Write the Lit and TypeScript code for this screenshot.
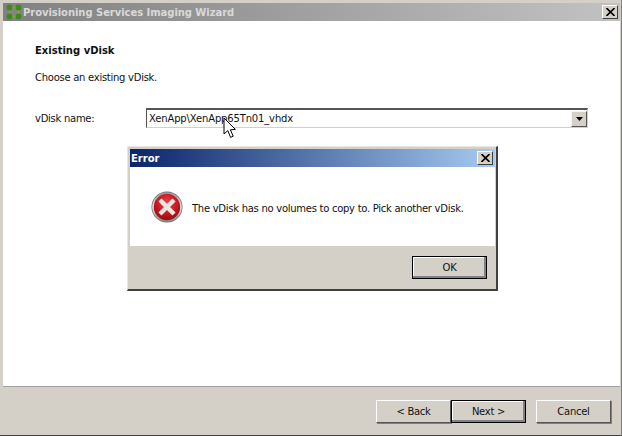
import { LitElement, html, css, svg } from "lit";
import { customElement } from "lit/decorators.js";

const logoIcon = svg`
  <svg class="logo" width="16" height="16" viewBox="0 0 16 16">
    <rect x="3.5" y="3.5" width="9" height="9" fill="#85857c" stroke="#86a544" stroke-width="1.6" />
    <circle cx="3.5" cy="3.5" r="2.9" fill="#3f8a1e" />
    <circle cx="12.5" cy="3.5" r="2.9" fill="#3f8a1e" />
    <circle cx="3.5" cy="12.5" r="2.9" fill="#3f8a1e" />
    <circle cx="12.5" cy="12.5" r="2.9" fill="#3f8a1e" />
  </svg>
`;

const errorIcon = svg`
  <svg class="error-icon" width="32" height="32" viewBox="0 0 32 32">
    <defs>
      <radialGradient id="red" cx="50%" cy="35%" r="70%">
        <stop offset="0" stop-color="#e8474a" />
        <stop offset="0.6" stop-color="#c4161c" />
        <stop offset="1" stop-color="#8c0d12" />
      </radialGradient>
      <linearGradient id="ring" x1="0" y1="0" x2="0" y2="1">
        <stop offset="0" stop-color="#9a9a9a" />
        <stop offset="0.5" stop-color="#e2e2e2" />
        <stop offset="1" stop-color="#8a8a8a" />
      </linearGradient>
    </defs>
    <circle cx="16" cy="16" r="15.5" fill="#6e6e6e" />
    <circle cx="16" cy="16" r="14.8" fill="url(#ring)" />
    <circle cx="16" cy="16" r="13.2" fill="url(#red)" />
    <path d="M10.5 10.5L21.5 21.5M21.5 10.5L10.5 21.5" stroke="#e9e6e6" stroke-width="4.4" stroke-linecap="square" />
  </svg>
`;

const closeIcon = svg`
  <svg width="9" height="8" viewBox="0 0 9 8">
    <path d="M0.5 0L8.5 8M8.5 0L0.5 8" stroke="#000" stroke-width="1.6" fill="none" />
  </svg>
`;

const arrowIcon = svg`
  <svg width="7" height="4" viewBox="0 0 7 4"><path d="M0 0H7L3.5 4Z" fill="#000" /></svg>
`;

const cursorIcon = svg`
  <svg class="cursor" width="14" height="22" viewBox="0 0 14 22">
    <path d="M1 1V17L4.8 13.6L7.6 20.4L10.2 19.2L7.4 12.8L12.4 12.4Z" fill="#fff" stroke="#000" stroke-width="1" stroke-linejoin="miter" />
  </svg>
`;

@customElement("app-root")
export class AppRoot extends LitElement {
  static override styles = css`
    :host {
      display: block;
      width: 622px;
      height: 436px;
      position: relative;
      overflow: hidden;
      font-family: "DejaVu Sans", sans-serif;
      font-size: 10px;
      letter-spacing: -0.27px;
      color: #111;
    }

    * {
      box-sizing: border-box;
    }

    .window {
      width: 622px;
      height: 436px;
      display: flex;
      flex-direction: column;
      padding: 3px 1px 0 3px;
      background: #d4d0c8;
      border-right: 1px solid #808080;
      border-bottom: 1px solid #404040;
    }

    .titlebar {
      height: 18px;
      flex: none;
      display: flex;
      align-items: center;
      gap: 1px;
      padding: 0 2px 0 3px;
      background: linear-gradient(90deg, #808080, #c2c2c2);
      color: #d9d9d9;
      font-weight: bold;
      letter-spacing: -0.05px;
    }

    .titlebar .text {
      flex: 1;
    }

    .close {
      width: 16px;
      height: 14px;
      flex: none;
      display: flex;
      align-items: center;
      justify-content: center;
      background: #d4d0c8;
      border: 1px solid;
      border-color: #fff #404040 #404040 #fff;
    }

    .body {
      flex: none;
      height: 366px;
      background: #fff;
      border-bottom: 1px solid #a0a0a0;
      padding: 23px 0 0 32px;
    }

    .heading {
      font-weight: bold;
      letter-spacing: 0;
      line-height: 13px;
      margin-bottom: 14px;
    }

    .hint {
      line-height: 13px;
      margin-bottom: 24px;
    }

    .field {
      display: flex;
      align-items: center;
    }

    .field label {
      width: 111px;
    }

    .combo {
      width: 442px;
      height: 20px;
      display: flex;
      align-items: center;
      justify-content: space-between;
      padding-left: 2px;
      background: #fff;
      border: 1px solid;
      border-color: #555 #d4d0c8 #d4d0c8 #555;
      border-top-width: 2px;
      letter-spacing: -0.15px;
    }

    .combo-btn {
      width: 16px;
      height: 16px;
      display: flex;
      align-items: center;
      justify-content: center;
      background: #d4d0c8;
      border: 1px solid;
      border-color: #f4f4f0 #555 #555 #f4f4f0;
    }

    .footer {
      flex: 1;
      display: flex;
      justify-content: flex-end;
      padding: 13px 9px 0 0;
    }

    .btn {
      width: 75px;
      height: 23px;
      display: flex;
      align-items: center;
      justify-content: center;
      background: #d4d0c8;
      border: 1px solid;
      border-color: #fff #555 #555 #fff;
      box-shadow: 1px 1px 0 #808080;
    }

    .btn.default {
      border: 1px solid #000;
      box-shadow: inset -2px -2px 0 #808080, inset 1px 1px 0 #fff;
    }

    .cancel {
      margin-left: 10px;
    }

    .dialog {
      position: absolute;
      left: 127px;
      top: 146px;
      width: 371px;
      height: 145px;
      display: flex;
      flex-direction: column;
      padding: 2px 1px 1px 2px;
      background: #d4d0c8;
      border: 1px solid;
      border-color: #e8e6e0 #404040 #404040 #e8e6e0;
      border-right-width: 2px;
      border-bottom-width: 2px;
    }

    .dialog-title {
      height: 18px;
      flex: none;
      display: flex;
      align-items: center;
      justify-content: space-between;
      padding: 0 2px 0 1px;
      background: linear-gradient(90deg, #0a246a, #a6caf0);
      color: #fff;
      font-weight: bold;
      letter-spacing: 0;
    }

    .dialog-body {
      height: 79px;
      flex: none;
      display: flex;
      align-items: center;
      gap: 9px;
      padding: 0 0 0 21px;
      background: #fff;
    }

    .dialog-message {
      padding-top: 4px;
    }

    .dialog-footer {
      flex: 1;
      display: flex;
      justify-content: flex-end;
      padding: 10px 8px 0 0;
    }

    .cursor {
      position: absolute;
      left: 223px;
      top: 117px;
    }
  `;

  override render() {
    return html`
      <div class="window">
        <div class="titlebar">
          ${logoIcon}
          <span class="text">Provisioning Services Imaging Wizard</span>
          <span class="close">${closeIcon}</span>
        </div>
        <div class="body">
          <div class="heading">Existing vDisk</div>
          <div class="hint">Choose an existing vDisk.</div>
          <div class="field">
            <label>vDisk name:</label>
            <div class="combo">
              <span>XenApp\\XenApp65Tn01_vhdx</span>
              <span class="combo-btn">${arrowIcon}</span>
            </div>
          </div>
        </div>
        <div class="footer">
          <div class="btn">&lt; Back</div>
          <div class="btn default">Next &gt;</div>
          <div class="btn cancel">Cancel</div>
        </div>
      </div>
      ${cursorIcon}
      <div class="dialog">
        <div class="dialog-title">
          <span>Error</span>
          <span class="close">${closeIcon}</span>
        </div>
        <div class="dialog-body">
          ${errorIcon}
          <span class="dialog-message">The vDisk has no volumes to copy to. Pick another vDisk.</span>
        </div>
        <div class="dialog-footer">
          <div class="btn default">OK</div>
        </div>
      </div>
    `;
  }
}

declare global {
  interface HTMLElementTagNameMap {
    "app-root": AppRoot;
  }
}
